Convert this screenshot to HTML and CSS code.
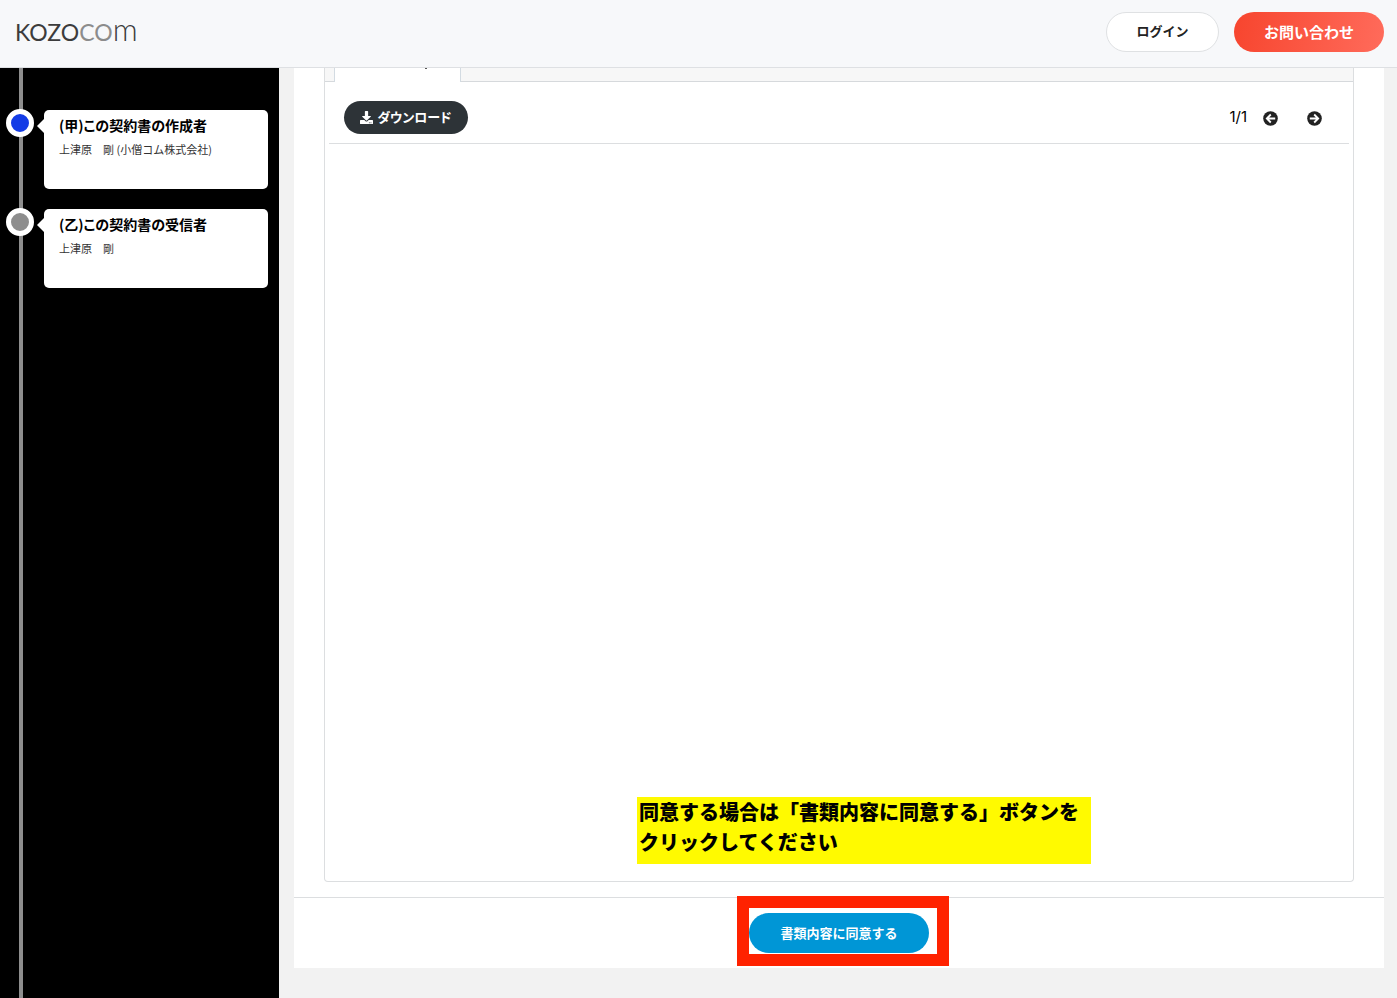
FILE: index.html
```html
<!DOCTYPE html>
<html lang="ja">
<head>
<meta charset="utf-8">
<meta name="viewport" content="width=device-width, initial-scale=1">
<title>KOZOCOM</title>
<link rel="stylesheet" href="styles.css">
</head>
<body>
<header class="header">
  <a class="logo" href="#" aria-label="kozocom">KOZO<span class="logo-light">CO</span><span class="logo-m">m</span></a>
  <nav class="header-actions">
    <button class="btn btn-login" type="button">ログイン</button>
    <button class="btn btn-contact" type="button">お問い合わせ</button>
  </nav>
</header>
<div class="layout">
  <aside class="sidebar">
    <ol class="timeline">
      <li class="step step-active">
        <div class="step-card">
          <h2 class="step-title">(甲)この契約書の作成者</h2>
          <p class="step-name">上津原　剛 (小僧コム株式会社)</p>
        </div>
      </li>
      <li class="step">
        <div class="step-card">
          <h2 class="step-title">(乙)この契約書の受信者</h2>
          <p class="step-name">上津原　剛</p>
        </div>
      </li>
    </ol>
  </aside>
  <main class="main">
    <div class="panel">
      <section class="document">
        <div class="tabs"><div class="tab"></div></div>
        <div class="toolbar">
          <button class="btn btn-download" type="button">
            <svg class="icon-download" viewBox="0 0 512 512" aria-hidden="true"><path fill="currentColor" d="M216 0h80c13 0 24 11 24 24v168h88c18 0 27 22 14 34L270 378c-7 7-20 7-27 0L90 226c-13-12-4-34 14-34h88V24c0-13 11-24 24-24zm296 376v112c0 13-11 24-24 24H24c-13 0-24-11-24-24V376c0-13 11-24 24-24h147l49 49c20 20 52 20 72 0l49-49h147c13 0 24 11 24 24zM388 464a20 20 0 1 0-40 0 20 20 0 0 0 40 0zm64 0a20 20 0 1 0-40 0 20 20 0 0 0 40 0z"/></svg>
            <span>ダウンロード</span>
          </button>
          <div class="pager">
            <span class="page-count">1/1</span>
            <button class="pager-btn" type="button" aria-label="前のページ">
              <svg class="icon-arrow" viewBox="0 0 15 15" aria-hidden="true"><circle cx="7.5" cy="7.5" r="7.3" fill="#222"/><path d="M12.2 7.5H4M7.8 3.5l-4 4 4 4" fill="none" stroke="#fff" stroke-width="1.8"/></svg>
            </button>
            <button class="pager-btn" type="button" aria-label="次のページ">
              <svg class="icon-arrow" viewBox="0 0 15 15" aria-hidden="true"><circle cx="7.5" cy="7.5" r="7.3" fill="#222"/><path d="M2.8 7.5H11M7.2 3.5l4 4-4 4" fill="none" stroke="#fff" stroke-width="1.8"/></svg>
            </button>
          </div>
        </div>
        <p class="note">同意する場合は「書類内容に同意する」ボタンを<br>クリックしてください</p>
      </section>
      <footer class="panel-footer">
        <div class="agree">
          <button class="btn btn-agree" type="button">書類内容に同意する</button>
        </div>
      </footer>
    </div>
  </main>
</div>
</body>
</html>
```
FILE: styles.css
```css
*, *::before, *::after { box-sizing: border-box; }

body {
  margin: 0;
  min-height: 100vh;
  display: flex;
  flex-direction: column;
  background: #f2f2f2;
  color: #000;
  font-family: "Noto Sans CJK JP", sans-serif;
}

.header {
  display: flex;
  align-items: center;
  justify-content: space-between;
  height: 68px;
  padding: 0 13px 4px 15px;
  background: #f7f8fa;
  border-bottom: 1px solid #dee0e3;
}

.logo {
  padding-bottom: 2px;
  color: #3c3c3c;
  font: 400 23px/32px Lato, sans-serif;
  text-decoration: none;
}
.logo-light { color: #8c8c8c; }
.logo-m { font-size: 31px; font-weight: 300; }

.header-actions { display: flex; gap: 15px; }

.btn {
  display: flex;
  align-items: center;
  justify-content: center;
  height: 40px;
  padding: 0 0 2px;
  border: 0;
  border-radius: 20px;
  color: #fff;
  font-family: inherit;
  font-size: 13px;
  font-weight: 700;
  white-space: nowrap;
}
.btn-login {
  width: 113px;
  border: 1px solid #dfe1e3;
  background: #fff;
  color: #222;
}
.btn-contact {
  width: 150px;
  padding-bottom: 0;
  background: linear-gradient(100deg, #f7452e, #ff6b5b);
  font-size: 15px;
}

.layout { flex: 1; display: flex; }

.sidebar {
  position: relative;
  flex: none;
  width: 279px;
  background: #000;
}
.sidebar::before {
  content: "";
  position: absolute;
  top: 0;
  bottom: 0;
  left: 19px;
  width: 4px;
  background: #8e8e8e;
}

.timeline {
  display: flex;
  flex-direction: column;
  gap: 20px;
  margin: 0;
  padding: 42px 11px 0 44px;
  list-style: none;
}
.step { position: relative; }
.step::before {
  content: "";
  position: absolute;
  top: -1px;
  left: -38px;
  width: 28px;
  height: 28px;
  border: 5px solid #fff;
  border-radius: 50%;
  background: #8e8e8e;
}
.step-active::before { background: #143ce6; }
.step::after {
  content: "";
  position: absolute;
  top: 9px;
  left: -7px;
  border: 7px solid transparent;
  border-left: 0;
  border-right-color: #fff;
}
.step-card {
  height: 79px;
  padding: 5px 15px;
  border-radius: 5px;
  background: #fff;
}
.step-title {
  margin: 0;
  font-size: 14px;
  font-feature-settings: "palt";
  line-height: 20px;
}
.step-name {
  margin: 4px 0 0;
  color: #333;
  font-size: 11px;
  line-height: 20px;
}

.main {
  flex: 1;
  display: flex;
  min-width: 0;
  padding: 0 13px 30px 15px;
}
.panel {
  flex: 1;
  display: flex;
  flex-direction: column;
  background: #fff;
}
.document {
  position: relative;
  flex: 1;
  margin: 0 30px 15px;
  border: 1px solid #dcdee0;
  border-top: 0;
  border-radius: 0 0 4px 4px;
}

.tabs {
  height: 14px;
  padding-left: 9px;
  border-bottom: 1px solid #d6d9dc;
  background: #f7f7f7;
}
.tab {
  position: relative;
  width: 127px;
  height: 14px;
  border: 1px solid #d3dbe2;
  border-width: 0 1px;
  background: #fff;
}
.tab::after {
  content: "";
  position: absolute;
  top: 0;
  left: 90px;
  width: 2px;
  height: 1px;
  background: #555;
}

.toolbar {
  display: flex;
  align-items: center;
  justify-content: space-between;
  margin: 0 4px;
  padding: 19px 27px 9px 15px;
  border-bottom: 1px solid #dcdee0;
}
.btn-download {
  gap: 4px;
  width: 124px;
  height: 33px;
  background: #2d3337;
  font-feature-settings: "palt";
}
.icon-download { width: 13px; height: 13px; margin-top: 2px; }

.pager { display: flex; align-items: center; }
.page-count {
  margin-right: 16px;
  padding-bottom: 2px;
  font: 15px/20px Inter, sans-serif;
}
.pager-btn {
  display: flex;
  padding: 2px 0 0;
  border: 0;
  background: none;
}
.pager-btn + .pager-btn { margin-left: 29px; }
.icon-arrow { width: 15px; height: 15px; }

.note {
  position: absolute;
  bottom: 17px;
  left: 312px;
  width: 454px;
  height: 67px;
  margin: 0;
  padding-left: 2px;
  background: #fffa00;
  font-size: 20px;
  font-weight: 900;
  line-height: 30px;
  white-space: nowrap;
}

.panel-footer {
  display: flex;
  justify-content: center;
  padding: 15px;
  border-top: 1px solid #dcdee0;
}
.agree { position: relative; }
.agree::after {
  content: "";
  position: absolute;
  top: -17px;
  right: -20px;
  bottom: -13px;
  left: -12px;
  border: 12px solid #ff2200;
  pointer-events: none;
}
.btn-agree { width: 180px; background: #0096d6; }
```
